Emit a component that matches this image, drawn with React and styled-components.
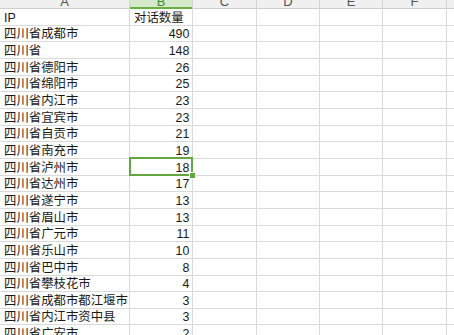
import React from "react";
import styled, { createGlobalStyle } from "styled-components";

const rows = [
  ["IP", "对话数量", true],
  ["四川省成都市", "490"],
  ["四川省", "148"],
  ["四川省德阳市", "26"],
  ["四川省绵阳市", "25"],
  ["四川省内江市", "23"],
  ["四川省宜宾市", "23"],
  ["四川省自贡市", "21"],
  ["四川省南充市", "19"],
  ["四川省泸州市", "18"],
  ["四川省达州市", "17"],
  ["四川省遂宁市", "13"],
  ["四川省眉山市", "13"],
  ["四川省广元市", "11"],
  ["四川省乐山市", "10"],
  ["四川省巴中市", "8"],
  ["四川省攀枝花市", "4"],
  ["四川省成都市都江堰市", "3"],
  ["四川省内江市资中县", "3"],
  ["四川省广安市", "2"],
];

const letters = ["A", "B", "C", "D", "E", "F", "G"];
const SELECTED_ROW = 9;

const App = () => {
  return (
    <>
      <GlobalStyle />
      <Sheet>
        <HeaderRow>
          {letters.map((l) => (
            <ColHeader key={l} $active={l === "B"}>
              {l}
            </ColHeader>
          ))}
        </HeaderRow>
        {rows.map(([ip, count, isHead], i) => (
          <Row key={i}>
            <Cell>{ip}</Cell>
            <Cell $num={!isHead} $selected={i === SELECTED_ROW}>
              {count}
            </Cell>
            <Cell />
            <Cell />
            <Cell />
            <Cell />
            <Cell />
          </Row>
        ))}
      </Sheet>
    </>
  );
};

export default App;

const GlobalStyle = createGlobalStyle`
  html, body {
    margin: 0;
    padding: 0;
    background: #ffffff;
    overflow: hidden;
  }
  * {
    box-sizing: border-box;
  }
`;

const Sheet = styled.div`
  width: 454px;
  height: 335px;
  overflow: hidden;
  font-family: "Liberation Sans", "Noto Sans CJK SC", sans-serif;
  color: #1a1a1a;
`;

const columns = `130px repeat(6, 63.33px)`;

const HeaderRow = styled.div`
  display: grid;
  grid-template-columns: ${columns};
  height: 9px;
`;

const ColHeader = styled.div`
  display: flex;
  justify-content: center;
  align-items: flex-end;
  overflow: hidden;
  height: 9px;
  font-size: 13px;
  line-height: 13px;
  color: ${(p) => (p.$active ? "#3d8a2a" : "#555")};
  background: ${(p) => (p.$active ? "#d5e8c8" : "#f0f0f0")};
  border-right: 1px solid #d4d4d4;
  box-shadow: ${(p) =>
    p.$active ? "inset 0 -2px 0 #6aae46" : "inset 0 -1px 0 #cfcfcf"};
  padding-bottom: 1px;
`;

const Row = styled.div`
  display: grid;
  grid-template-columns: ${columns};
  height: 16.67px;
`;

const Cell = styled.div`
  position: relative;
  display: flex;
  align-items: flex-end;
  justify-content: ${(p) => (p.$num ? "flex-end" : "flex-start")};
  padding: 0 3px 0 4px;
  font-size: 12.4px;
  line-height: 13px;
  white-space: nowrap;
  border-right: 1px solid #dadada;
  border-bottom: 1px solid #dadada;

  ${(p) =>
    p.$selected &&
    `
    &::after {
      content: "";
      position: absolute;
      left: -1px;
      top: -2px;
      right: -1px;
      bottom: -1px;
      border: 2px solid #62a83f;
    }
    &::before {
      content: "";
      position: absolute;
      right: -4px;
      bottom: -4px;
      width: 5px;
      height: 5px;
      background: #62a83f;
      border: 1px solid #ffffff;
      z-index: 2;
    }
  `}
`;
